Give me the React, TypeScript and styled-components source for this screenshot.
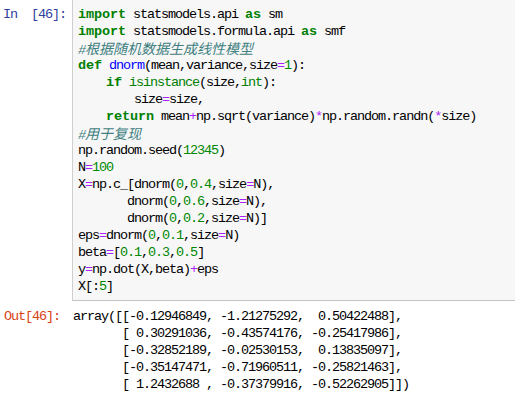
import React from "react";
import styled, { createGlobalStyle } from "styled-components";

const Global = createGlobalStyle`
  html, body { margin: 0; padding: 0; background: #ffffff; }
  body { overflow: hidden; }
`;

const MONO = `"Liberation Mono", "Noto Sans CJK SC", monospace`;

const Notebook = styled.div`
  width: 515px;
  height: 403px;
  overflow: hidden;
  font-family: ${MONO};
  font-size: 13.5px;
  letter-spacing: -1.1px;
  color: #000;
`;

const CellRow = styled.div<{ $mt?: number }>`
  display: flex;
  align-items: flex-start;
  margin-top: ${(p) => p.$mt ?? 0}px;
`;

const Prompt = styled.div<{ $kind: "in" | "out"; $pt: number }>`
  flex: 0 0 72px;
  box-sizing: border-box;
  padding: ${(p) => p.$pt}px 0 0 ${(p) => (p.$kind === "in" ? 3 : 4)}px;
  color: ${(p) => (p.$kind === "in" ? "#303F9F" : "#D84315")};
  white-space: pre;
  line-height: 17px;
`;

const InputArea = styled.div`
  flex: 1;
  background: #f7f7f8;
  border: 1px solid #cfcfcf;
  border-top: none;
  border-right: none;
  border-bottom-color: #c4c4c6;
  padding: 6px 0 5px 5px;
  margin-right: -4px;
`;

const OutputArea = styled.div`
  flex: 1;
  padding-left: 1px;
`;

const Line = styled.div`
  height: 17px;
  line-height: 17px;
  white-space: pre;
`;

const Kw = styled.span`
  color: #008000;
  font-weight: bold;
  letter-spacing: -0.1px;
`;
const Fn = styled.span`
  color: #0000ff;
`;
const Op = styled.span`
  color: #aa22ff;
`;
const Num = styled.span`
  color: #008800;
`;
const Bi = styled.span`
  color: #008000;
`;
const Cm = styled.span`
  color: #408080;
  font-style: italic;
`;
const Cjk = styled.span`
  font-family: "Noto Sans CJK SC", sans-serif;
  font-size: 14px;
  letter-spacing: 0;
`;

const outputLines = [
  "array([[-0.12946849, -1.21275292,  0.50422488],",
  "       [ 0.30291036, -0.43574176, -0.25417986],",
  "       [-0.32852189, -0.02530153,  0.13835097],",
  "       [-0.35147471, -0.71960511, -0.25821463],",
  "       [ 1.2432688 , -0.37379916, -0.52262905]])",
];

export default function App() {
  return (
    <Notebook>
      <Global />
      <CellRow>
        <Prompt $kind="in" $pt={6}>{"In  [46]:"}</Prompt>
        <InputArea>
          <Line><Kw>import</Kw> statsmodels.api <Kw>as</Kw> sm</Line>
          <Line><Kw>import</Kw> statsmodels.formula.api <Kw>as</Kw> smf</Line>
          <Line><Cm>#<Cjk>根据随机数据生成线性模型</Cjk></Cm></Line>
          <Line><Kw>def</Kw> <Fn>dnorm</Fn>(mean,variance,size<Op>=</Op><Num>1</Num>):</Line>
          <Line>{"    "}<Kw>if</Kw> <Bi>isinstance</Bi>(size,<Bi>int</Bi>):</Line>
          <Line>{"        "}size<Op>=</Op>size,</Line>
          <Line>{"    "}<Kw>return</Kw> mean<Op>+</Op>np.sqrt(variance)<Op>*</Op>np.random.randn(<Op>*</Op>size)</Line>
          <Line><Cm>#<Cjk>用于复现</Cjk></Cm></Line>
          <Line>np.random.seed(<Num>12345</Num>)</Line>
          <Line>N<Op>=</Op><Num>100</Num></Line>
          <Line>X<Op>=</Op>np.c_[dnorm(<Num>0</Num>,<Num>0.4</Num>,size<Op>=</Op>N),</Line>
          <Line>{"       "}dnorm(<Num>0</Num>,<Num>0.6</Num>,size<Op>=</Op>N),</Line>
          <Line>{"       "}dnorm(<Num>0</Num>,<Num>0.2</Num>,size<Op>=</Op>N)]</Line>
          <Line>eps<Op>=</Op>dnorm(<Num>0</Num>,<Num>0.1</Num>,size<Op>=</Op>N)</Line>
          <Line>beta<Op>=</Op>[<Num>0.1</Num>,<Num>0.3</Num>,<Num>0.5</Num>]</Line>
          <Line>y<Op>=</Op>np.dot(X,beta)<Op>+</Op>eps</Line>
          <Line>X[:<Num>5</Num>]</Line>
        </InputArea>
      </CellRow>
      <CellRow $mt={7}>
        <Prompt $kind="out" $pt={0}>{"Out[46]:"}</Prompt>
        <OutputArea>
          {outputLines.map((l, i) => (
            <Line key={i}>{l}</Line>
          ))}
        </OutputArea>
      </CellRow>
    </Notebook>
  );
}
